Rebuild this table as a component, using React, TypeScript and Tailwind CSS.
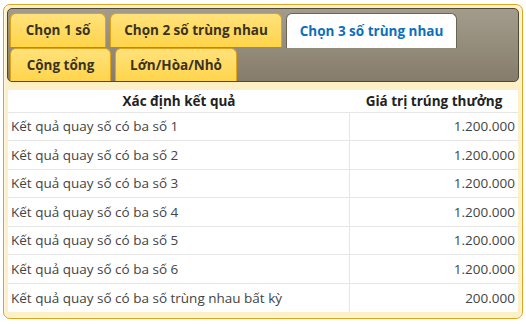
import { FC } from "react";

const rows = [
    { label: "Kết quả quay số có ba số 1", value: "1.200.000" },
    { label: "Kết quả quay số có ba số 2", value: "1.200.000" },
    { label: "Kết quả quay số có ba số 3", value: "1.200.000" },
    { label: "Kết quả quay số có ba số 4", value: "1.200.000" },
    { label: "Kết quả quay số có ba số 5", value: "1.200.000" },
    { label: "Kết quả quay số có ba số 6", value: "1.200.000" },
    { label: "Kết quả quay số có ba số trùng nhau bất kỳ", value: "200.000" },
];

const Tab: FC<{ label: string; width: string; active?: boolean }> = ({ label, width, active }) => {
    if (active) {
        return (
            <div className={`${width} h-[35px] -mb-px rounded-t-[6px] border border-b-0 border-[#6b6454] bg-white flex items-center justify-center text-[13.5px] font-bold text-[#0b6fc0]`}>
                {label}
            </div>
        );
    }
    return (
        <div className={`${width} h-[34px] rounded-t-[6px] border border-b-0 border-[#e2a318] bg-gradient-to-b from-[#ffe27a] to-[#ffd448] flex items-center justify-center text-[13.5px] font-bold text-[#3a3222]`}>
            {label}
        </div>
    );
};

const App: FC = () => {
    return (
        <div className="w-[526px] h-[324px] bg-white pt-[4px] pl-[3px]" style={{ fontFamily: '"Open Sans", "Noto Sans", sans-serif' }}>
            <div className="w-[520px] h-[315px] rounded-[7px] border border-[#e0a21c] bg-[#fef0c6] shadow-[inset_0_0_0_1px_#fff8e0] px-[3px] pt-[3px]">
                {/* tab header */}
                <div className="h-[74px] rounded-[5px] border border-[#4e4839] bg-gradient-to-b from-[#a39c8c] via-[#958d7c] to-[#857c6a] pt-[4px] pl-[2px] flex flex-col gap-px overflow-hidden">
                    <div className="flex gap-[4px] items-end">
                        <Tab label="Chọn 1 số" width="w-[96px]" />
                        <Tab label="Chọn 2 số trùng nhau" width="w-[172px]" />
                        <Tab label="Chọn 3 số trùng nhau" width="w-[171px]" active />
                    </div>
                    <div className="flex gap-[4px]">
                        <Tab label="Cộng tổng" width="w-[101px]" />
                        <Tab label="Lớn/Hòa/Nhỏ" width="w-[122px]" />
                    </div>
                </div>

                {/* table */}
                <div className="mt-[8px] ml-px w-[510px] bg-white text-[13.5px]">
                    <div className="flex h-[23px] border-b border-[#e6e6e6] font-bold text-[#222] items-center">
                        <div className="w-[342px] text-center">Xác định kết quả</div>
                        <div className="flex-1 text-center">Giá trị trúng thưởng</div>
                    </div>
                    {rows.map((row, i) => (
                        <div key={i} className={`flex ${i % 2 ? "h-[29px]" : "h-[28px]"} ${i < rows.length - 1 ? "border-b border-[#e6e6e6]" : ""} text-[#444]`}>
                            <div className="w-[342px] border-r border-[#e6e6e6] flex items-center pl-[3px]">{row.label}</div>
                            <div className="flex-1 flex items-center justify-end pr-[3px]">{row.value}</div>
                        </div>
                    ))}
                </div>
            </div>
        </div>
    );
};

export default App;
